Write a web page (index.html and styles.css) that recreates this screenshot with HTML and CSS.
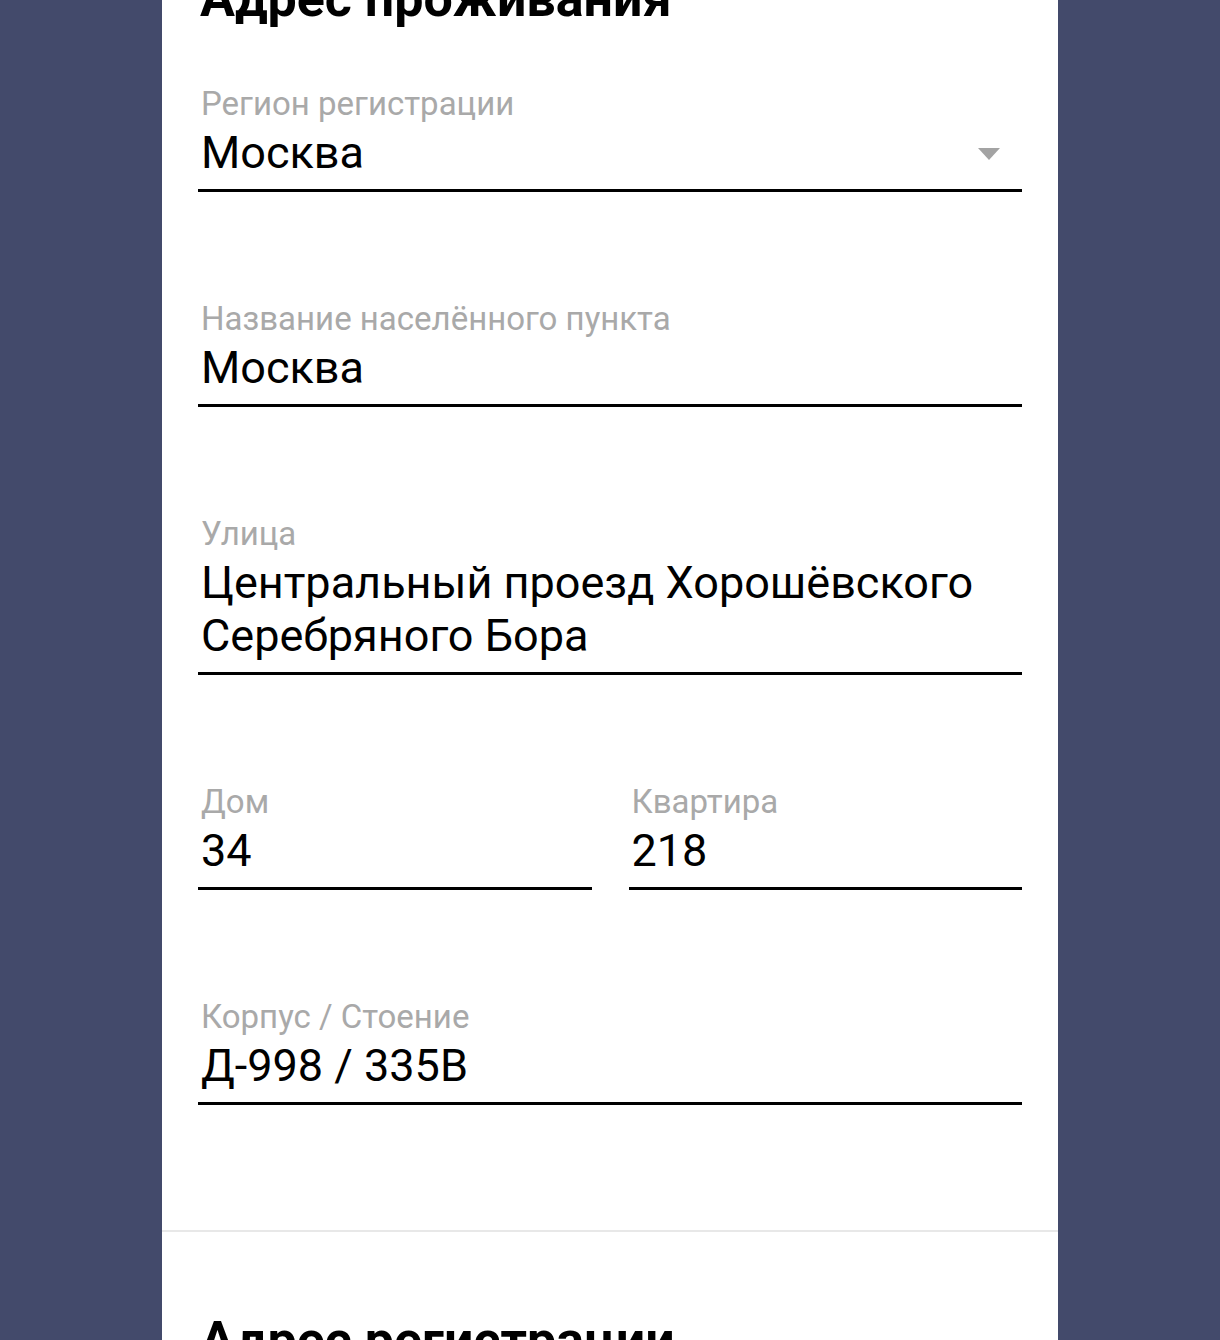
FILE: index.html
```html
<!DOCTYPE html>
<html lang="ru">
<head>
<meta charset="utf-8">
<title>Адрес</title>
<link rel="stylesheet" href="styles.css">
</head>
<body>
<div class="panel">
  <section class="section section-first">
    <h2 class="heading">Адрес проживания</h2>
    <div class="field">
      <div class="label">Регион регистрации</div>
      <div class="value value-select">
        <span>Москва</span>
        <svg class="arrow" width="22" height="12" viewBox="0 0 22 12"><path d="M0 0 H22 L11 12 Z" fill="#a3a3a3"/></svg>
      </div>
    </div>
    <div class="field">
      <div class="label">Название населённого пункта</div>
      <div class="value">Москва</div>
    </div>
    <div class="field">
      <div class="label">Улица</div>
      <div class="value">Центральный проезд Хорошёвского Серебряного Бора</div>
    </div>
    <div class="field-row">
      <div class="field">
        <div class="label">Дом</div>
        <div class="value">34</div>
      </div>
      <div class="field">
        <div class="label">Квартира</div>
        <div class="value">218</div>
      </div>
    </div>
    <div class="field field-last">
      <div class="label">Корпус / Стоение</div>
      <div class="value">Д-998 / 335В</div>
    </div>
  </section>
  <section class="section">
    <h2 class="heading">Адрес регистрации</h2>
  </section>
</div>
</body>
</html>
```
FILE: styles.css
```css
html, body {
  margin: 0;
  padding: 0;
  background: #434a6b;
  font-family: Roboto, "Noto Sans", sans-serif;
  height: 1340px;
  overflow: hidden;
}
.panel {
  width: 896px;
  margin: 0 auto;
  background: #ffffff;
  min-height: 1400px;
}
.section {
  padding: 0 36px;
}
.section-first {
  margin-top: -32px;
  padding-bottom: 125px;
  border-bottom: 2px solid #e8e8e8;
}
.section + .section {
  padding-top: 78px;
}
.heading {
  margin: 0;
  font-size: 52px;
  line-height: 62px;
  font-weight: 700;
  color: #000;
  padding-left: 2px;
}
.section-first .heading {
  margin-bottom: 55px;
}
.field {
  display: flex;
  flex-direction: column;
  margin-bottom: 108px;
}
.field-last {
  margin-bottom: 0;
}
.field-row {
  display: grid;
  grid-template-columns: 1fr 1fr;
  column-gap: 37px;
}
.label {
  font-size: 33px;
  line-height: 38px;
  color: #a9a9a9;
  padding-left: 3px;
}
.value {
  margin-top: 3px;
  font-size: 45px;
  line-height: 53px;
  color: #000;
  padding: 0 0 10px 3px;
  border-bottom: 3px solid #000;
}
.value-select {
  display: flex;
  align-items: center;
  justify-content: space-between;
  padding-right: 22px;
}
.arrow {
  display: block;
  margin-top: 2px;
}
```
